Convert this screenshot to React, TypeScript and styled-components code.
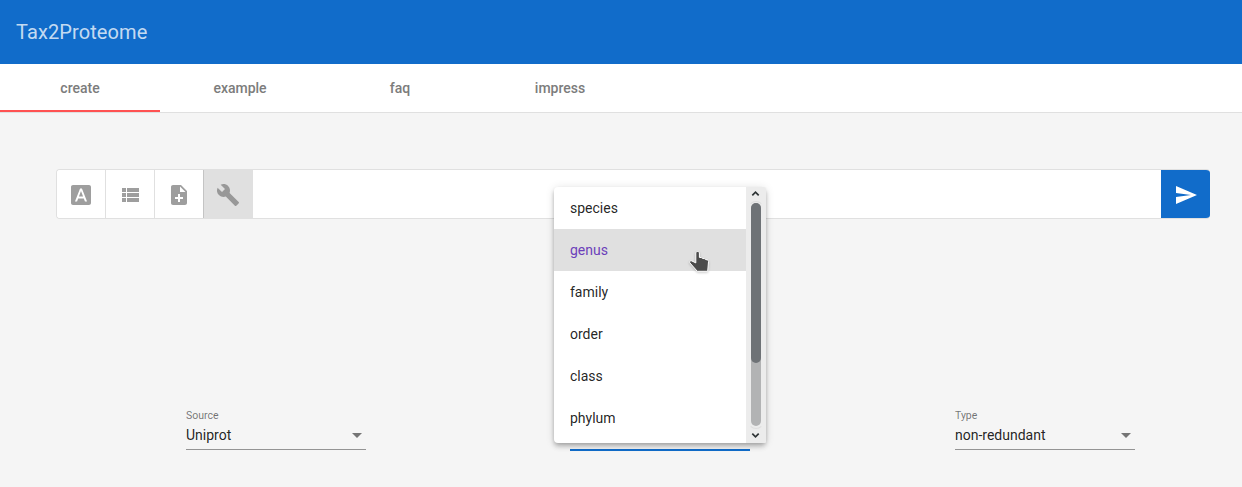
import React from "react";
import styled, { createGlobalStyle } from "styled-components";

const GlobalStyle = createGlobalStyle`
  * { box-sizing: border-box; }
  html, body { margin: 0; height: 100%; overflow: hidden; }
  body {
    background: #f5f5f5;
    font-family: Roboto, "Liberation Sans", sans-serif;
    color: rgba(0, 0, 0, 0.87);
  }
`;

const Page = styled.div`
  position: relative;
  display: flex;
  flex-direction: column;
  height: 487px;
  overflow: hidden;
`;

const Header = styled.header`
  display: flex;
  align-items: center;
  height: 64px;
  padding: 0 16px;
  background: #116cca;
  color: rgba(255, 255, 255, 0.77);
  font-size: 20px;
  line-height: 32px;
  letter-spacing: 0.1px;
`;

const Tabs = styled.nav`
  display: flex;
  height: 49px;
  background: #fff;
  border-bottom: 1px solid #e0e0e0;
`;

const Tab = styled.a<{ $active?: boolean }>`
  display: flex;
  align-items: center;
  justify-content: center;
  width: 160px;
  height: 48px;
  font-size: 14px;
  font-weight: 500;
  color: #7c7c7c;
  box-shadow: ${(p) => (p.$active ? "inset 0 -2px 0 #ff5252" : "none")};
`;

const Main = styled.main`
  display: flex;
  flex-direction: column;
  padding: 56px 32px 0 56px;
`;

const SearchBar = styled.div`
  display: flex;
  height: 50px;
  border: 1px solid #e0e0e0;
  border-right: 0;
  border-radius: 4px;
  background: #fff;
  overflow: hidden;
`;

const ToolButton = styled.button<{ $selected?: boolean }>`
  display: flex;
  align-items: center;
  justify-content: center;
  width: ${(p) => (p.$selected ? 50 : 49)}px;
  height: 48px;
  padding: ${(p) => (p.$selected ? "2px 1px 0 0" : "2px 0 0")};
  border: 0;
  border-left: 1px solid ${(p) => (p.$selected ? "#c4c4c4" : "#e0e0e0")};
  background: ${(p) => (p.$selected ? "#e0e0e0" : "#fff")};
  color: ${(p) => (p.$selected ? "#989898" : "#9e9e9e")};
  &:first-child {
    width: 48px;
    border-left: 0;
  }
`;

const SearchInput = styled.input`
  flex: 1;
  min-width: 0;
  border: 0;
  outline: 0;
  background: transparent;
`;

const SendButton = styled.button`
  display: flex;
  align-items: center;
  justify-content: center;
  width: 49px;
  height: 48px;
  padding: 2px 0 0;
  border: 0;
  background: #116cca;
  color: #fff;
`;

const Icon = styled.svg`
  display: block;
  width: 24px;
  height: 24px;
  fill: currentColor;
`;

const Fields = styled.div`
  display: flex;
  margin-top: 189px;
  padding-left: 130px;
`;

const Field = styled.div<{ $focused?: boolean }>`
  width: 180px;
  height: ${(p) => (p.$focused ? 43 : 42)}px;
  margin-right: ${(p) => (p.$focused ? 205 : 204)}px;
  border-bottom: ${(p) => (p.$focused ? "2px solid #116cca" : "1px solid #949494")};
  flex-shrink: 0;
  &:last-child {
    margin-right: 0;
  }
`;

const FieldLabel = styled.div`
  height: 15px;
  font-size: 10.5px;
  line-height: 15px;
  color: rgba(0, 0, 0, 0.54);
`;

const FieldValue = styled.div`
  display: flex;
  align-items: center;
  justify-content: space-between;
  height: 24px;
  padding-right: 4px;
  font-size: 14px;
`;

const Caret = styled.span`
  border-left: 5px solid transparent;
  border-right: 5px solid transparent;
  border-top: 5px solid #757575;
`;

const Menu = styled.div`
  position: absolute;
  left: 554px;
  top: 187px;
  width: 212px;
  height: 256px;
  border-radius: 4px;
  background: #fff;
  box-shadow: 0 2px 4px -1px rgba(0, 0, 0, 0.2), 0 4px 5px 0 rgba(0, 0, 0, 0.14),
    0 1px 10px 0 rgba(0, 0, 0, 0.12);
`;

const MenuPanel = styled.div`
  display: flex;
  height: 256px;
  border-radius: 4px 2px 1px 4px;
  overflow: hidden;
`;

const Options = styled.div`
  flex: 1;
`;

const Option = styled.div<{ $selected?: boolean }>`
  height: 42px;
  padding: 0 16px;
  font-size: 14px;
  line-height: 42px;
  color: ${(p) => (p.$selected ? "#6c3fba" : "rgba(0, 0, 0, 0.87)")};
  background: ${(p) => (p.$selected ? "#e0e0e0" : "transparent")};
`;

const Scrollbar = styled.div`
  display: flex;
  flex-direction: column;
  align-items: center;
  justify-content: space-between;
  width: 20px;
  background: #ececec;
`;

const ScrollArrow = styled.svg`
  display: block;
  width: 20px;
  height: 14px;
  fill: none;
  stroke: #2e3436;
  stroke-width: 1.7;
`;

const Track = styled.div`
  width: 16px;
  height: 228px;
  padding: 1px 2px;
  border: 1px solid #dedede;
  border-left-color: transparent;
  border-right-color: transparent;
  border-radius: 8px;
`;

const TrackBar = styled.div`
  width: 10px;
  height: 223px;
  border-radius: 5px;
  background: #b2b3b4;
`;

const Thumb = styled.div`
  height: 160px;
  border-radius: 5px;
  background: #6e7276;
`;

const Cursor = styled.svg`
  position: absolute;
  left: 688px;
  top: 249px;
  width: 22px;
  height: 26px;
  overflow: visible;
  filter: drop-shadow(0 1px 1px rgba(0, 0, 0, 0.2));
`;

const iconPaths = {
  font: "M9.93 13.5h4.14L12 7.98zM20 2H4c-1.1 0-2 .9-2 2v16c0 1.1.9 2 2 2h16c1.1 0 2-.9 2-2V4c0-1.1-.9-2-2-2zm-4.05 16.5l-1.14-3H9.17l-1.12 3H5.96l5.11-13h1.86l5.11 13h-2.09z",
  list: "M4 14h4v-4H4v4zm0 5h4v-4H4v4zM4 9h4V5H4v4zm5 5h12v-4H9v4zm0 5h12v-4H9v4zM9 5v4h12V5H9z",
  addFile:
    "M14 2H6c-1.1 0-1.99.9-1.99 2L4 20c0 1.1.89 2 1.99 2H18c1.1 0 2-.9 2-2V8l-6-6zm2 14h-3v3h-2v-3H8v-2h3v-3h2v3h3v2zm-3-7V3.5L18.5 9H13z",
  wrench:
    "M22.7 19l-9.1-9.1c.9-2.3.4-5-1.5-6.9-2-2-5-2.4-7.4-1.3L9 6 6 9 1.6 4.7C.4 7.1.9 10.1 2.9 12.1c1.9 1.9 4.6 2.4 6.9 1.5l9.1 9.1c.4.4 1 .4 1.4 0l2.3-2.3c.5-.4.5-1.1.1-1.4z",
  send: "M2.01 21L23 12 2.01 3 2 10l15 2-15 2z",
};

const MaterialIcon = ({ name }: { name: keyof typeof iconPaths }) => (
  <Icon viewBox="0 0 24 24">
    <path d={iconPaths[name]} />
  </Icon>
);

const tabs = ["create", "example", "faq", "impress"];
const tools = [
  { icon: "font", label: "Names" },
  { icon: "list", label: "List" },
  { icon: "addFile", label: "Upload" },
  { icon: "wrench", label: "Options" },
] as const;
const ranks = ["species", "genus", "family", "order", "class", "phylum"];

export default function App() {
  return (
    <>
      <GlobalStyle />
      <Page>
        <Header>Tax2Proteome</Header>
        <Tabs>
          {tabs.map((tab) => (
            <Tab key={tab} $active={tab === "create"}>
              {tab}
            </Tab>
          ))}
        </Tabs>
        <Main>
          <SearchBar>
            {tools.map((tool) => (
              <ToolButton key={tool.icon} aria-label={tool.label} $selected={tool.icon === "wrench"}>
                <MaterialIcon name={tool.icon} />
              </ToolButton>
            ))}
            <SearchInput aria-label="Search" />
            <SendButton aria-label="Send">
              <MaterialIcon name="send" />
            </SendButton>
          </SearchBar>
          <Fields>
            <Field>
              <FieldLabel>Source</FieldLabel>
              <FieldValue>
                Uniprot
                <Caret />
              </FieldValue>
            </Field>
            <Field $focused />
            <Field>
              <FieldLabel>Type</FieldLabel>
              <FieldValue>
                non-redundant
                <Caret />
              </FieldValue>
            </Field>
          </Fields>
        </Main>
        <Menu>
          <MenuPanel>
            <Options>
              {ranks.map((rank) => (
                <Option key={rank} $selected={rank === "genus"}>
                  {rank}
                </Option>
              ))}
            </Options>
            <Scrollbar>
              <ScrollArrow viewBox="0 0 20 14">
                <path d="M6.3 8.3 9.5 5.1l3.2 3.2" />
              </ScrollArrow>
              <Track>
                <TrackBar>
                  <Thumb />
                </TrackBar>
              </Track>
              <ScrollArrow viewBox="0 0 20 14">
                <path d="M6.3 4.7 9.5 7.9 12.7 4.7" />
              </ScrollArrow>
            </Scrollbar>
          </MenuPanel>
        </Menu>
        <Cursor viewBox="0 0 22 26">
          <path
            d="M7.8 4c0-2 3.6-2 3.6 0v4.4l2 .2 1.2.9 1.8.1 1.2.9 1.8.4c.9.3 1.2.9 1.1 1.8L19.7 22.3H9.3L1.8 13.8c-.8-1.4.6-2.5 2-1.9l4 2z"
            fill="#4b4b4b"
            stroke="#fff"
            strokeWidth="1"
            strokeLinejoin="round"
          />
        </Cursor>
      </Page>
    </>
  );
}
